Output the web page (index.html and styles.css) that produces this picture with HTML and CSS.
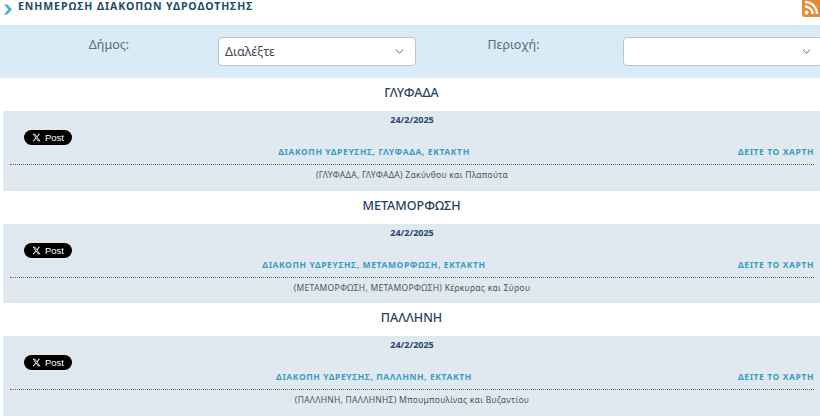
FILE: index.html
```html
<!DOCTYPE html>
<html lang="el">
<head>
<meta charset="utf-8">
<title>Ενημέρωση διακοπών υδροδότησης</title>
<link rel="stylesheet" href="styles.css">
</head>
<body>
<header class="top">
  <svg class="arrow" width="10" height="11" viewBox="0 0 10 11"><path d="M1 .5h3.6L9 5.5l-4.4 5H1l4.2-5z" fill="#4fb0cf"/></svg>
  <h1 class="title">ΕΝΗΜΕΡΩΣΗ ΔΙΑΚΟΠΩΝ ΥΔΡΟΔΟΤΗΣΗΣ</h1>
  <svg class="rss" width="18" height="17" viewBox="0 0 18 17"><rect x="0" y="-4" width="24" height="21" rx="3" fill="#e58a35"/><circle cx="4.5" cy="12.5" r="2" fill="#fff"/><path d="M3 6.5a7.5 7.5 0 0 1 7.5 7.5M3 2a12 12 0 0 1 12 12" fill="none" stroke="#fff" stroke-width="2.4"/></svg>
</header>
<section class="filters">
  <label class="flabel">Δήμος:</label>
  <div class="select"><span>Διαλέξτε</span><svg width="9" height="5" viewBox="0 0 9 5"><path d="M.8.6l3.7 3.6L8.2.6" fill="none" stroke="#666" stroke-width="1"/></svg></div>
  <label class="flabel flabel-right">Περιοχή:</label>
  <div class="select"><span></span><svg width="9" height="5" viewBox="0 0 9 5"><path d="M.8.6l3.7 3.6L8.2.6" fill="none" stroke="#666" stroke-width="1"/></svg></div>
</section>
<main>
  <h2 class="place">ΓΛΥΦΑΔΑ</h2>
  <article class="card">
    <div class="date">24/2/2025</div>
    <div class="row">
      <a class="post"><svg width="9" height="9" viewBox="0 0 24 24"><path fill="#fff" d="M18.2 2.3h3.3l-7.2 8.2 8.5 11.2h-6.7l-5.2-6.8-6 6.8H1.7l7.7-8.8L1.3 2.3H8l4.7 6.2zm-1.2 17.5h1.8L7.1 4.1h-2z"/></svg>Post</a>
      <a class="link">ΔΙΑΚΟΠΗ ΥΔΡΕΥΣΗΣ, ΓΛΥΦΑΔΑ, ΕΚΤΑΚΤΗ</a>
      <a class="map">ΔΕΙΤΕ ΤΟ ΧΑΡΤΗ</a>
    </div>
    <p class="detail">(ΓΛΥΦΑΔΑ, ΓΛΥΦΑΔΑ) Ζακύνθου και Πλαπούτα</p>
  </article>
  <h2 class="place">ΜΕΤΑΜΟΡΦΩΣΗ</h2>
  <article class="card">
    <div class="date">24/2/2025</div>
    <div class="row">
      <a class="post"><svg width="9" height="9" viewBox="0 0 24 24"><path fill="#fff" d="M18.2 2.3h3.3l-7.2 8.2 8.5 11.2h-6.7l-5.2-6.8-6 6.8H1.7l7.7-8.8L1.3 2.3H8l4.7 6.2zm-1.2 17.5h1.8L7.1 4.1h-2z"/></svg>Post</a>
      <a class="link">ΔΙΑΚΟΠΗ ΥΔΡΕΥΣΗΣ, ΜΕΤΑΜΟΡΦΩΣΗ, ΕΚΤΑΚΤΗ</a>
      <a class="map">ΔΕΙΤΕ ΤΟ ΧΑΡΤΗ</a>
    </div>
    <p class="detail">(ΜΕΤΑΜΟΡΦΩΣΗ, ΜΕΤΑΜΟΡΦΩΣΗ) Κέρκυρας και Σύρου</p>
  </article>
  <h2 class="place">ΠΑΛΛΗΝΗ</h2>
  <article class="card">
    <div class="date">24/2/2025</div>
    <div class="row">
      <a class="post"><svg width="9" height="9" viewBox="0 0 24 24"><path fill="#fff" d="M18.2 2.3h3.3l-7.2 8.2 8.5 11.2h-6.7l-5.2-6.8-6 6.8H1.7l7.7-8.8L1.3 2.3H8l4.7 6.2zm-1.2 17.5h1.8L7.1 4.1h-2z"/></svg>Post</a>
      <a class="link">ΔΙΑΚΟΠΗ ΥΔΡΕΥΣΗΣ, ΠΑΛΛΗΝΗ, ΕΚΤΑΚΤΗ</a>
      <a class="map">ΔΕΙΤΕ ΤΟ ΧΑΡΤΗ</a>
    </div>
    <p class="detail">(ΠΑΛΛΗΝΗ, ΠΑΛΛΗΝΗΣ) Μπουμπουλίνας και Βυζαντίου</p>
  </article>
</main>
</body>
</html>
```
FILE: styles.css
```css
* { box-sizing: border-box; }
html, body { margin: 0; padding: 0; height: 417px; overflow: hidden; background: #fff; }
body { font-family: "Noto Sans", sans-serif; color: #1f4260; }
.top { display: flex; align-items: flex-start; height: 25px; padding-left: 3px; }
.arrow { margin-top: 4px; flex: none; }
.title { margin: 0 0 0 5px; flex: 1; font-size: 10.5px; line-height: 13px; font-weight: 700; letter-spacing: 0.95px; color: #1c4a68; }
.rss { flex: none; }
.filters { display: grid; grid-template-columns: 218px 198px 207px 200px; height: 53px; background: #d9ebf7; padding-top: 12px; align-items: start; width: 823px; }
.flabel { text-align: center; font-size: 12.5px; line-height: 16px; color: #5b6b78; }
.flabel-right { padding-right: 12px; }
.select { display: flex; align-items: center; justify-content: space-between; height: 29px; background: #fff; border: 1px solid #b9c6cf; border-radius: 4px; padding: 0 11px 0 6px; font-size: 12.5px; color: #3d4a55; }
.place { margin: 0; height: 33px; padding-top: 7px; text-align: center; font-size: 12.5px; line-height: 16px; font-weight: 500; color: #1f4260; padding-left: 3px; }
.card { margin-left: 3px; height: 79.5px; background: #e0e9ef; padding: 3px 6px 0 7px; }
.date { text-align: center; font-size: 9px; line-height: 12px; font-weight: 700; color: #27476b; }
.row { display: grid; grid-template-columns: 120px 488px 1fr; height: 39px; border-bottom: 1px dotted #666; padding-bottom: 6px; align-items: end; }
.post { align-self: start; margin-left: 14px; margin-top: 4px; width: 48px; height: 15px; display: flex; align-items: center; justify-content: center; gap: 4px; background: #000; color: #fff; border-radius: 8px; font-family: "Liberation Sans", sans-serif; font-size: 9.5px; }
.link { text-align: center; font-size: 8.5px; line-height: 12px; font-weight: 700; letter-spacing: 0.62px; color: #3b9cc4; }
.map { text-align: right; font-size: 8.5px; line-height: 12px; font-weight: 700; letter-spacing: 0.6px; color: #3b9cc4; }
.detail { margin: 4px 0 0; text-align: center; font-size: 8.5px; line-height: 12px; letter-spacing: 0.27px; color: #4a5660; }
```
